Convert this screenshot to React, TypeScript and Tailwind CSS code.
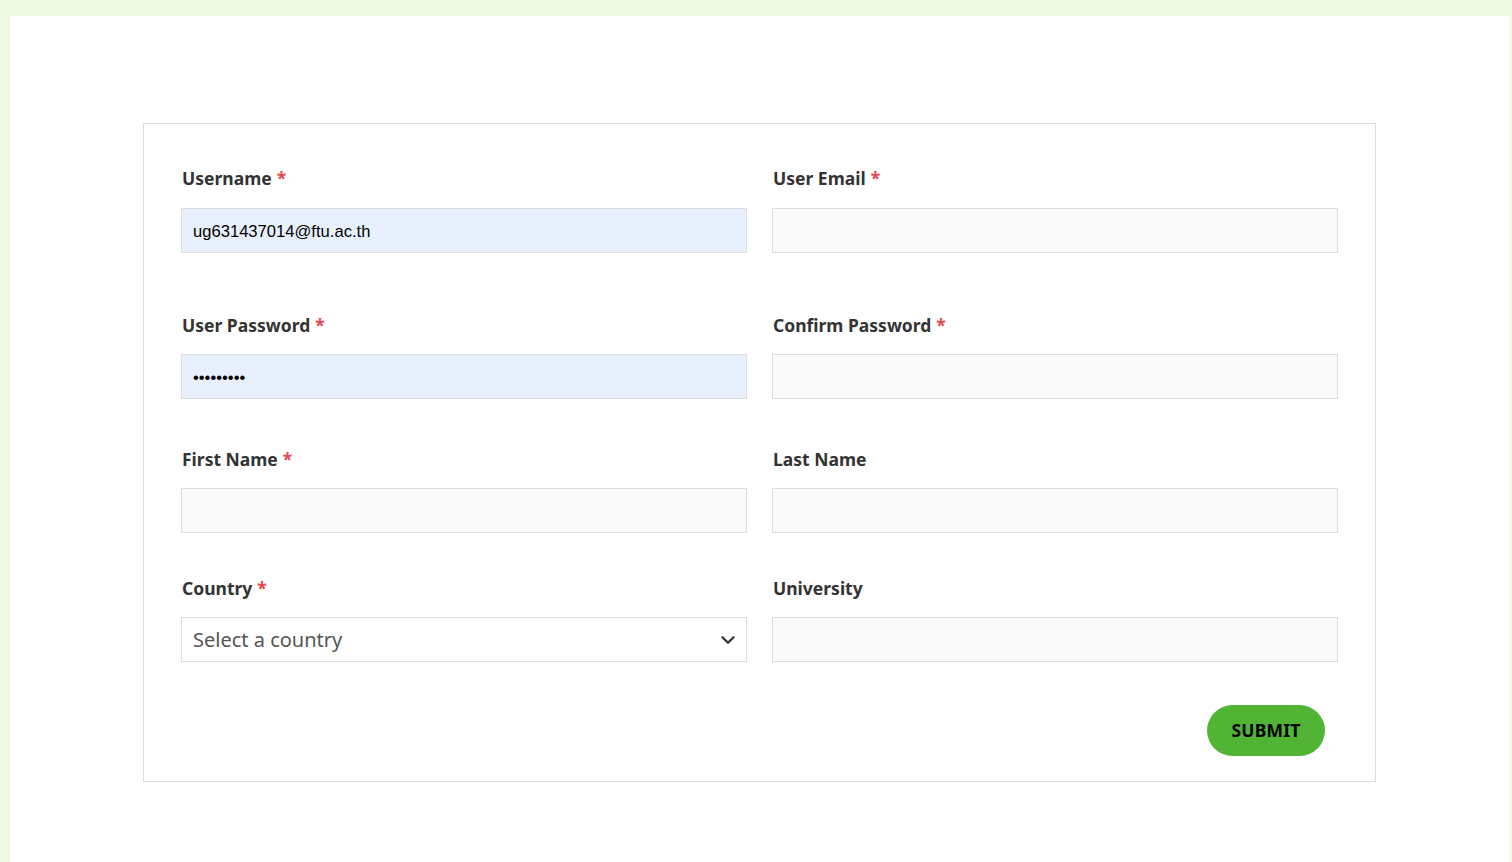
import React from "react";
import { ChevronDown } from "lucide-react";

const Label = ({ text, required }: { text: string; required?: boolean }) => (
  <div className="pl-px text-[17.5px] leading-6 font-bold text-[#333333]">
    {text}
    {required && <span className="text-[#e5484d] ml-[5px]">*</span>}
  </div>
);

const inputBase =
  "block w-full h-[45px] border border-[#dddddd] pl-[11px] pr-[11px] pt-[2px] outline-none text-[16.6px] text-black font-['Liberation_Sans',Arial,sans-serif]";

export default function App() {
  return (
    <div className="min-h-[862px] bg-[#eefae1] pt-4 pl-[10px] pr-[3px] font-['Noto_Sans',sans-serif]">
      <div className="bg-white min-h-[846px] pt-[107px] pl-[133px] pr-[133px]">
        <div className="border border-[#dedede] pl-[37px] pr-[37px] pt-[42px] pb-[25px]">
          <div className="grid grid-cols-2 gap-x-[25px]">
            <div>
              <Label text="Username" required />
              <input className={`${inputBase} bg-[#e8f0fe] mt-[18px]`} defaultValue="ug631437014@ftu.ac.th" />
            </div>
            <div>
              <Label text="User Email" required />
              <input className={`${inputBase} bg-[#fafafa] mt-[18px]`} />
            </div>

            <div className="mt-[60px]">
              <Label text="User Password" required />
              <input type="password" className={`${inputBase} bg-[#e8f0fe] mt-[17px]`} defaultValue="123456789" />
            </div>
            <div className="mt-[60px]">
              <Label text="Confirm Password" required />
              <input type="password" className={`${inputBase} bg-[#fafafa] mt-[17px]`} />
            </div>

            <div className="mt-[48px]">
              <Label text="First Name" required />
              <input className={`${inputBase} bg-[#fafafa] mt-[17px]`} />
            </div>
            <div className="mt-[48px]">
              <Label text="Last Name" />
              <input className={`${inputBase} bg-[#fafafa] mt-[17px]`} />
            </div>

            <div className="mt-[43px]">
              <Label text="Country" required />
              <div className="mt-[17px] h-[45px] border border-[#dddddd] bg-white flex items-center pl-[11px] pr-[7px]">
                <span className="text-[20px] text-[#555555] flex-1">Select a country</span>
                <ChevronDown size={22} strokeWidth={2.5} className="text-[#333333]" />
              </div>
            </div>
            <div className="mt-[43px]">
              <Label text="University" />
              <input className={`${inputBase} bg-[#fafafa] mt-[17px]`} />
            </div>
          </div>

          <div className="flex justify-end mt-[43px] pr-[13px]">
            <button className="w-[118px] h-[51px] rounded-full bg-[#51b435] text-black font-bold text-[17.5px] tracking-[0.2px]">
              SUBMIT
            </button>
          </div>
        </div>
      </div>
    </div>
  );
}
